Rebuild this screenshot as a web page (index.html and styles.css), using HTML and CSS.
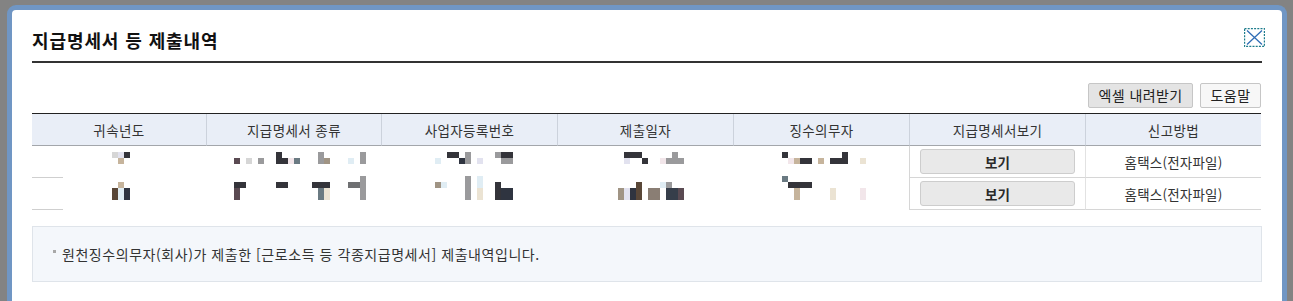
FILE: index.html
```html
<!DOCTYPE html>
<html lang="ko">
<head>
<meta charset="utf-8">
<title>지급명세서 등 제출내역</title>
<link rel="stylesheet" href="styles.css">
</head>
<body>
<div class="dialog">
  <div class="dlg-head">
    <h2 class="title">지급명세서 등 제출내역</h2>
    <button class="close" type="button" aria-label="닫기">
      <svg width="21" height="19" viewBox="0 0 21 19">
        <rect x="0.5" y="0.5" width="20" height="18" fill="none" stroke="#1d7c8c" stroke-width="1.4" stroke-dasharray="2 1.2"/>
        <path d="M3 2.5 L18 16.5 M18 2.5 L3 16.5" stroke="#2f6db5" stroke-width="1.3" fill="none"/>
      </svg>
    </button>
  </div>

  <div class="toolbar">
    <button class="btn btn-excel" type="button">엑셀 내려받기</button>
    <button class="btn btn-help" type="button">도움말</button>
  </div>

  <table class="grid">
    <colgroup>
      <col class="c1"><col class="c2"><col class="c3"><col class="c4"><col class="c5"><col class="c6"><col class="c7">
    </colgroup>
    <thead>
      <tr>
        <th>귀속년도</th>
        <th>지급명세서 종류</th>
        <th>사업자등록번호</th>
        <th>제출일자</th>
        <th>징수의무자</th>
        <th>지급명세서보기</th>
        <th>신고방법</th>
      </tr>
    </thead>
    <tbody>
      <tr class="r1">
        <td class="blur first">
          <div class="mosaic m1">
            <span class="l"></span><span class="lav"></span><span class="d"></span><i></i>
            <i></i><span class="t"></span><i></i><i></i>
          </div>
        </td>
        <td class="blur">
          <div class="mosaic m2">
            <i></i><i></i><i></i><i></i><i></i><i></i><i></i><span class="d"></span><i></i><i></i><i></i><i></i><i></i><i></i><span class="g"></span><i></i><i></i><i></i><i></i><i></i><i></i><span class="g"></span>
            <span class="dm"></span><i></i><span class="l"></span><i></i><span class="g"></span><i></i><i></i><span class="d"></span><span class="d"></span><span class="p"></span><span class="gb"></span><i></i><i></i><i></i><span class="g"></span><span class="tg"></span><i></i><i></i><i></i><span class="lb"></span><i></i><span class="g"></span>
          </div>
        </td>
        <td class="blur">
          <div class="mosaic m3">
            <i></i><i></i><span class="d"></span><span class="d"></span><i></i><span class="g"></span><i></i><i></i><i></i><i></i><span class="g"></span><span class="d"></span><span class="d"></span>
            <span class="lb"></span><i></i><i></i><i></i><span class="db"></span><span class="g"></span><i></i><span class="lav"></span><i></i><i></i><i></i><span class="g"></span><span class="g"></span>
          </div>
        </td>
        <td class="blur">
          <div class="mosaic m4">
            <i></i><span class="d"></span><span class="d"></span><span class="d"></span><i></i><i></i><i></i><i></i><i></i><span class="g"></span><i></i>
            <i></i><span class="lav"></span><i></i><i></i><span class="d"></span><i></i><i></i><span class="p"></span><span class="g"></span><span class="g"></span><span class="g"></span>
          </div>
        </td>
        <td class="blur">
          <div class="mosaic m5">
            <span class="d"></span><i></i><i></i><i></i><i></i><i></i><i></i><i></i><i></i><i></i><span class="d"></span><i></i><i></i><i></i>
            <i></i><span class="p"></span><span class="t"></span><span class="d"></span><span class="d"></span><i></i><span class="t"></span><i></i><span class="d"></span><span class="d"></span><span class="d"></span><i></i><i></i><span class="lt"></span>
          </div>
        </td>
        <td class="view"><button class="btn-view" type="button">보기</button></td>
        <td class="method">홈택스(전자파일)</td>
      </tr>
      <tr class="r2">
        <td class="blur first">
          <div class="mosaic m1">
            <i></i><i></i><i></i><i></i>
            <i></i><span class="t"></span><i></i><i></i>
            <span class="b"></span><span class="lb"></span><span class="db"></span><i></i>
            <span class="b"></span><span class="lb"></span><span class="db"></span><i></i>
          </div>
        </td>
        <td class="blur">
          <div class="mosaic m2">
            <i></i><i></i><i></i><i></i><i></i><i></i><i></i><i></i><i></i><i></i><i></i><i></i><i></i><i></i><i></i><i></i><i></i><i></i><i></i><i></i><i></i><span class="g"></span>
            <span class="d"></span><span class="d"></span><i></i><i></i><i></i><i></i><i></i><span class="d"></span><span class="d"></span><i></i><i></i><i></i><i></i><span class="d"></span><span class="d"></span><span class="d"></span><i></i><i></i><i></i><span class="g6"></span><span class="g6"></span><span class="g"></span>
            <span class="dm"></span><i></i><i></i><i></i><i></i><i></i><i></i><i></i><i></i><i></i><i></i><i></i><i></i><i></i><span class="gb"></span><span class="lt"></span><i></i><i></i><i></i><i></i><i></i><span class="g"></span>
            <span class="dm"></span><i></i><i></i><i></i><i></i><i></i><i></i><i></i><i></i><i></i><i></i><i></i><i></i><i></i><span class="gb"></span><span class="lt"></span><i></i><i></i><i></i><i></i><i></i><span class="g"></span>
          </div>
        </td>
        <td class="blur">
          <div class="mosaic m3">
            <i></i><i></i><i></i><i></i><i></i><span class="g"></span><i></i><span class="lb"></span><i></i><i></i><i></i><i></i><i></i>
            <span class="tg"></span><span class="lb"></span><i></i><i></i><i></i><span class="g"></span><i></i><span class="lb"></span><i></i><i></i><span class="d"></span><i></i><i></i>
            <i></i><i></i><i></i><i></i><i></i><span class="g"></span><i></i><span class="lt"></span><i></i><i></i><span class="d"></span><span class="db"></span><span class="db"></span>
            <i></i><i></i><i></i><i></i><i></i><span class="g"></span><i></i><span class="lt"></span><i></i><i></i><span class="d"></span><span class="db"></span><span class="db"></span>
          </div>
        </td>
        <td class="blur">
          <div class="mosaic m4">
            <i></i><i></i><i></i><i></i><i></i><i></i><i></i><i></i><i></i><i></i><i></i>
            <i></i><i></i><i></i><span class="b"></span><i></i><i></i><i></i><span class="lb"></span><span class="g"></span><i></i><i></i>
            <span class="tg"></span><span class="lav"></span><span class="db"></span><span class="b"></span><i></i><span class="bg"></span><span class="bg"></span><i></i><span class="dbl"></span><span class="dbl"></span><span class="dm"></span>
            <span class="tg"></span><span class="lav"></span><span class="db"></span><span class="b"></span><i></i><span class="bg"></span><span class="bg"></span><i></i><span class="dbl"></span><span class="dbl"></span><span class="dm"></span>
          </div>
        </td>
        <td class="blur">
          <div class="mosaic m5">
            <span class="gb"></span><i></i><i></i><i></i><i></i><i></i><i></i><i></i><i></i><i></i><i></i><i></i><i></i><i></i>
            <i></i><span class="d"></span><span class="d"></span><span class="d"></span><span class="d"></span><i></i><i></i><i></i><i></i><i></i><i></i><i></i><i></i><i></i>
            <i></i><i></i><span class="t"></span><i></i><i></i><i></i><i></i><i></i><span class="lt"></span><i></i><i></i><i></i><i></i><span class="p"></span>
            <i></i><i></i><span class="t"></span><i></i><i></i><i></i><i></i><i></i><span class="lt"></span><i></i><i></i><i></i><i></i><span class="p"></span>
          </div>
        </td>
        <td class="view"><button class="btn-view" type="button">보기</button></td>
        <td class="method">홈택스(전자파일)</td>
      </tr>
    </tbody>
  </table>

  <div class="notice">
    <p class="notice-item">원천징수의무자(회사)가 제출한 [근로소득 등 각종지급명세서] 제출내역입니다.</p>
  </div>
</div>
</body>
</html>
```

FILE: styles.css
```css
html, body {
  margin: 0;
  padding: 0;
  height: 100%;
  overflow: hidden;
}

body {
  background: #838383;
  font-family: "Noto Sans CJK KR", "Noto Sans", sans-serif;
  color: #333;
}

.dialog {
  margin: 5px 6px 0 7px;
  border: 5px solid #7096c4;
  border-bottom: 0;
  border-radius: 9px 9px 0 0;
  background: #fff;
  padding: 0 20px;
  height: 400px;
}

.dlg-head {
  display: flex;
  justify-content: space-between;
  align-items: flex-start;
  padding: 17px 0 8px;
  border-bottom: 2px solid #333;
}

.title {
  margin: 0;
  font-size: 18px;
  line-height: 26px;
  font-weight: 700;
  letter-spacing: 0.9px;
  color: #111;
}

.close {
  margin: 1px -3px 0 0;
  padding: 0;
  border: 0;
  background: none;
  width: 21px;
  height: 19px;
  display: block;
}

.close svg {
  display: block;
}

.toolbar {
  display: flex;
  justify-content: flex-end;
  gap: 7px;
  margin-top: 20px;
  margin-bottom: 5px;
  padding-right: 1px;
}

.btn {
  height: 25px;
  padding: 0;
  border: 1px solid #c6c6c6;
  border-radius: 2px;
  font-family: inherit;
  font-size: 14px;
  line-height: 23px;
  letter-spacing: 0.4px;
  color: #222;
  cursor: pointer;
}

.btn-excel {
  width: 105px;
  background: #e4e4e4;
}

.btn-help {
  width: 61px;
  background: #f7f7f7;
}

.grid {
  width: 1229px;
  table-layout: fixed;
  border-collapse: separate;
  border-spacing: 0;
  border-top: 1px solid #222;
}

.c1 { width: 174px; }
.c2 { width: 175px; }
.c3, .c4, .c5, .c6, .c7 { width: 176px; }

.grid th {
  height: 32px;
  padding: 0;
  background: #e9eef7;
  border-bottom: 1px solid #a3a6ab;
  border-left: 1px solid #ccd2dc;
  font-size: 13.5px;
  font-weight: 400;
  letter-spacing: 0.4px;
  color: #333;
  text-align: center;
  box-sizing: border-box;
}

.grid th:first-child {
  border-left: 0;
}

.grid td {
  height: 32px;
  padding: 0;
  box-sizing: border-box;
  font-size: 13.5px;
  letter-spacing: 0.2px;
  color: #333;
  text-align: center;
}

.grid td.blur {
  vertical-align: top;
  text-align: left;
  position: relative;
}

.grid td.first::after {
  content: "";
  position: absolute;
  left: 0;
  bottom: 0;
  width: 31px;
  height: 1px;
  background: #cfcfcf;
}

.grid td.view,
.grid td.method {
  border-bottom: 1px solid #d6d6d6;
}

.grid td.view {
  border-left: 1px solid #d6d6d6;
}

.grid td.method {
  border-left: 1px solid #e2e2e2;
}

.btn-view {
  display: block;
  width: 155px;
  height: 25px;
  margin: 0 auto 0 10px;
  padding: 0;
  border: 1px solid #cdcdcd;
  border-radius: 3px;
  background: #e9e9e9;
  font-family: inherit;
  font-size: 13.5px;
  font-weight: 700;
  color: #2a2a2a;
}

.mosaic {
  display: grid;
  grid-auto-rows: 6px;
}

.mosaic i,
.mosaic span {
  display: block;
}

.r1 .mosaic { margin-top: 6px; }
.r2 .mosaic { margin-top: -2px; }

.m1 { grid-template-columns: repeat(4, 6px); margin-left: 80px; }
.m2 { grid-template-columns: repeat(22, 6px); margin-left: 28px; }
.m3 { grid-template-columns: repeat(13, 6px); margin-left: 54px; }
.m4 { grid-template-columns: repeat(11, 6px); margin-left: 61px; }
.m5 { grid-template-columns: repeat(14, 6px); margin-left: 49px; }

.mosaic .d { background: #34343a; }
.mosaic .dm { background: #5a4a52; }
.mosaic .db { background: #2f3440; }
.mosaic .dbl { background: #363e4a; }
.mosaic .g { background: #9a9a9c; }
.mosaic .g6 { background: #6f7072; }
.mosaic .gb { background: #6a7a82; }
.mosaic .l { background: #d6d6d6; }
.mosaic .p { background: #f2e6ea; }
.mosaic .lb { background: #e0edf4; }
.mosaic .lav { background: #e2e2ef; }
.mosaic .t { background: #c6b49c; }
.mosaic .tg { background: #a09484; }
.mosaic .lt { background: #ebe3d3; }
.mosaic .b { background: #594738; }
.mosaic .bg { background: #8a7e74; }

.notice {
  margin-top: 16px;
  height: 56px;
  box-sizing: border-box;
  border: 1px solid #dfe4ea;
  background: #f4f7fb;
  display: flex;
  align-items: center;
  padding: 0 20px 0 20px;
}

.notice-item {
  margin: 0;
  font-size: 14px;
  line-height: 20px;
  letter-spacing: 0.55px;
  color: #333;
  display: flex;
  align-items: center;
  gap: 6px;
}

.notice-item::before {
  content: "";
  width: 3px;
  height: 3px;
  background: #a8a8a8;
  margin-top: -6px;
}
```
